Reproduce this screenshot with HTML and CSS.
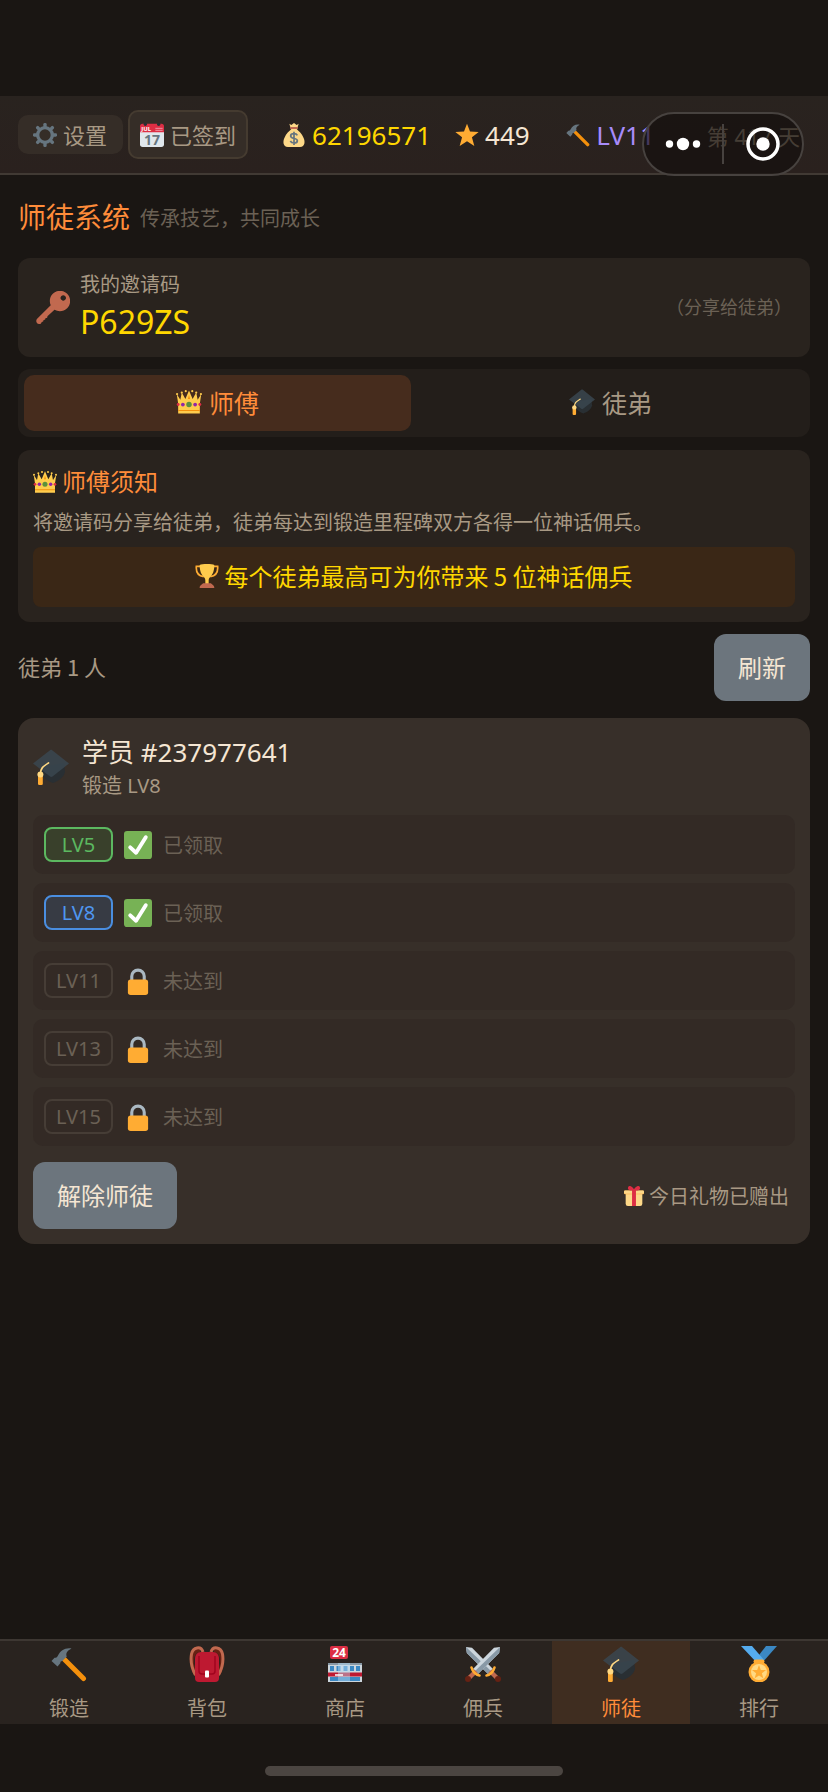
FILE: index.html
```html
<!DOCTYPE html>
<html lang="zh-CN">
<head>
  <meta charset="UTF-8">
  <meta name="viewport" content="width=device-width, initial-scale=1.0">
  <title>师徒系统</title>
  <link rel="stylesheet" href="styles.css">
</head>
<body>
  <!-- icon sprite -->
  <svg class="sprite" aria-hidden="true">
    <symbol id="i-gear" viewBox="0 0 36 36">
      <g fill="#66757f">
        <g id="teeth">
          <rect x="15.5" y="0" width="5" height="8" rx="2"/>
          <rect x="15.5" y="28" width="5" height="8" rx="2"/>
        </g>
        <use href="#teeth" transform="rotate(45 18 18)"/>
        <use href="#teeth" transform="rotate(90 18 18)"/>
        <use href="#teeth" transform="rotate(135 18 18)"/>
      </g>
      <circle cx="18" cy="18" r="11" fill="none" stroke="#66757f" stroke-width="5"/>
    </symbol>
    <symbol id="i-money" viewBox="0 0 36 36">
      <path fill="#fdd888" d="M31.9 21.5C30 16 25 12 22 9h-8c-3 3-8 7-9.9 12.500C1 27 1 36 9 36h18c8 0 8-9 4.900-14.500z"/>
      <path fill="#fdd888" d="M11 1l3 2 4-3 4 3 3-2-2 7H13z"/>
      <rect x="12" y="6" width="12" height="3" rx="1.5" fill="#bf6952"/>
      <path fill="none" stroke="#67757f" stroke-width="2.6" d="M23 18.500c-1-2-3-2.500-5-2.500-3 0-5 1.200-5 3.500 0 5 10 2.500 10 7 0 2.500-2 3.500-5 3.500-2.500 0-4.500-1-5.500-3M18 13v20"/>
    </symbol>
    <symbol id="i-star" viewBox="0 0 36 36">
      <path fill="#ffac33" d="M18 1l4.500 11.800L35.500 13.400 25.400 21.500 29 34.500 18 27.200 7 34.500 10.600 21.500.500 13.400 13.500 12.800z"/>
    </symbol>
    <symbol id="i-hammer" viewBox="0 0 36 36">
      <path stroke="#f4900c" stroke-width="5" stroke-linecap="round" d="M13 13l19.500 19.500"/>
      <path fill="#66757f" d="M20.500 2.500C14 1.500 9.500 4.500 7 9.500c-1 2-2 2.300-3.500 2.300L.500 15l6 5.500 2.800-3.200c0-1.500.700-2.300 2-2.300l4.500-4.500C14.500 7.500 16 4.800 20.500 2.500z"/>
    </symbol>
    <symbol id="i-key" viewBox="0 0 36 36">
      <path fill="#c1694f" fill-rule="evenodd" d="M33 3c-4.200-4.200-11-4.200-15.200 0-3.300 3.300-4 8-2.200 12L1.200 29.400C-.600 31.200.300 35 3.200 35c2 0 2.600-1 2.800-2.300 1.500 0 2-.700 1.900-2.100 1.600.1 2.200-.500 2.200-2 1.400.1 2.100-.400 2-1.800l7.500-6.900c4.200 2.400 9.800 1.900 13.400-1.700C37.200 14 37.200 7.200 33 3zm-2.200 6.300a2.700 2.700 0 1 1-3.900-3.900 2.700 2.700 0 0 1 3.900 3.900z"/>
    </symbol>
    <symbol id="i-crown" viewBox="0 0 36 36">
      <path fill="#ffcc4d" d="M3 34V20L1 7l5 8 2-10 5 9 5-12 5 12 5-9 2 10 5-8-2 13v14z"/>
      <path fill="#f4900c" d="M18 8l1.500 6h-3zM3 29h30v1.500H3z"/>
      <g fill="#ffcc4d"><circle cx="1.5" cy="7" r="1.5"/><circle cx="8" cy="5" r="1.5"/><circle cx="13.5" cy="3" r="1.5"/><circle cx="22.5" cy="3" r="1.5"/><circle cx="28" cy="5" r="1.5"/><circle cx="34.5" cy="7" r="1.5"/></g>
      <circle cx="18" cy="21.5" r="3.8" fill="#5c913b"/>
      <circle cx="9.5" cy="21.5" r="2.6" fill="#9226a8"/>
      <circle cx="26.5" cy="21.5" r="2.6" fill="#9226a8"/>
      <circle cx="3" cy="21.5" r="2" fill="#dd2e44"/>
      <circle cx="33" cy="21.5" r="2" fill="#dd2e44"/>
    </symbol>
    <symbol id="i-cap" viewBox="0 0 36 36">
      <path fill="#292f33" d="M9 18l22-4 1 9c-1.500 6-7 9-12 11-5-2-9-4-11-9z"/>
      <path fill="#394650" fill-opacity=".85" d="M0 14.500L17 1.200c.7-.5 1.500-.5 2.200 0L36 14.500 19.500 27.500c-.8.600-1.600.6-2.400 0z"/>
      <path fill="none" stroke="#ffd983" stroke-width="1.7" stroke-linecap="round" d="M15.500 14C10 17.500 7.500 19 7.500 25"/>
      <rect x="5" y="24.5" width="4.8" height="11.5" rx="1.3" fill="#ffac33"/>
      <circle cx="7.4" cy="25.5" r="3" fill="#ffd983"/>
    </symbol>
    <symbol id="i-trophy" viewBox="0 0 36 36">
      <path fill="none" stroke="#ffac33" stroke-width="2.5" d="M9 3.500H2c-.600 7 2 14 11 15.500M27 3.500h7c.600 7-2 14-11 15.500"/>
      <path fill="#ffcc4d" d="M7 1.500C10-.300 26-.300 29 1.500c0 9-2.500 14.500-6.500 18.500-1.500 1.500-2 3-2 5v5h-5v-5c0-2-.500-3.500-2-5C9.500 16 7 10.500 7 1.500z"/>
      <path fill="#c1694f" d="M12 29h12c1 2 5 2.500 5 6.900H7C7 31.500 11 31 12 29z"/>
    </symbol>
    <symbol id="i-check" viewBox="0 0 36 36">
      <rect width="36" height="36" rx="4" fill="#77b255"/>
      <path fill="none" stroke="#fff" stroke-width="5" stroke-linecap="round" stroke-linejoin="round" d="M8 21l7.500 7L28 8"/>
    </symbol>
    <symbol id="i-lock" viewBox="0 0 36 36">
      <path fill="none" stroke="#aab8c2" stroke-width="4" d="M10 18v-6a8 8 0 0 1 16 0v6"/>
      <rect x="5" y="16" width="26" height="20" rx="3.5" fill="#ffac33"/>
    </symbol>
    <symbol id="i-gift" viewBox="0 0 36 36">
      <path fill="#fdd888" d="M3 14h30v18a4 4 0 0 1-4 4H7a4 4 0 0 1-4-4z"/>
      <rect y="8" width="36" height="7" rx="2" fill="#fcab40"/>
      <rect y="8" width="36" height="6" rx="2" fill="#fdd888"/>
      <path fill="#dd2e44" d="M14.500 8h7v28h-7zM18 8C9 9 5 6 8 1c3-3 8 1 10 5 2-4 7-8 10-5 3 5-1 8-10 7z"/>
    </symbol>
    <symbol id="i-backpack" viewBox="0 0 36 36">
      <path fill="none" stroke="#662113" stroke-width="4" d="M11 4C1 5 1 20 8 30M25 4c10 1 10 16 3 26"/>
      <path fill="none" stroke="#c1694f" stroke-width="3" d="M14 6C12-.500 4 1 2.500 8c-1 6 0 14 4 21M22 6c2-6.500 10-5 11.500 2 1 6 0 14-4 21"/>
      <path fill="#be1931" d="M12 6h12c4 0 6 3 6 7v19a4 4 0 0 1-4 4H10a4 4 0 0 1-4-4V13c0-4 2-7 6-7z"/>
      <path fill="none" stroke="#a0041e" stroke-width="1.5" d="M10 10v15c0 2 1 3 3 3h10c2 0 3-1 3-3V10"/>
      <rect x="16" y="24.5" width="4" height="7" rx="1" fill="#fff"/>
    </symbol>
    <symbol id="i-swords" viewBox="0 0 36 36">
      <g id="sword">
        <path fill="#ccd6dd" d="M1 1l6 .8L28 23l-5 5L1.800 7z"/>
        <path fill="#8899a6" d="M1 1l25.500 24.500L23 28 1.800 7z"/>
        <path stroke="#c1694f" stroke-width="4.5" d="M25 25l8 8"/>
        <path fill="none" stroke="#ffac33" stroke-width="2.6" stroke-linecap="round" d="M21.500 29.500C25 29 28.500 25.500 29.500 21.500"/>
        <circle cx="33" cy="33" r="3" fill="#662113"/>
      </g>
      <use href="#sword" transform="matrix(-1 0 0 1 36 0)"/>
    </symbol>
    <symbol id="i-medal" viewBox="0 0 36 36">
      <path fill="#3b88c3" d="M25 0L15 13l6 4L36 0z"/>
      <path fill="#55acee" d="M0 0h11l12 14-6 4z"/>
      <rect x="12.5" y="13.5" width="11" height="4" rx="2" fill="#ffac33"/>
      <circle cx="18" cy="26" r="10.5" fill="#ffac33"/>
      <circle cx="18" cy="26" r="8" fill="#ffd983"/>
      <path fill="#ffac33" d="M18 19l1.800 4.900 5.200.2-4.100 3.200 1.400 5-4.300-2.900-4.300 2.900 1.400-5-4.100-3.200 5.200-.2z"/>
    </symbol>
  </svg>

  <header class="topbar">
    <button type="button" class="btn-settings"><svg class="icon icon-24"><use href="#i-gear"/></svg>设置</button>
    <button type="button" class="btn-sign">
      <svg class="icon icon-24" viewBox="0 0 36 36" aria-hidden="true">
        <path fill="#e0e7ec" d="M36 32a4 4 0 0 1-4 4H4a4 4 0 0 1-4-4V9h36z"/>
        <path fill="#dd2e44" d="M0 14V5a4 4 0 0 1 4-4h28a4 4 0 0 1 4 4v9z"/>
        <circle cx="8" cy="2" r="2.5" fill="#292f33"/>
        <circle cx="28" cy="2" r="2.5" fill="#292f33"/>
        <path stroke="#f4abba" stroke-width="1.2" d="M23 8h11M23 11h11"/>
        <text x="2" y="12" font-size="9" font-weight="700" fill="#fff">JUL</text>
        <text x="18" y="33" font-size="21" font-weight="700" fill="#66757f" text-anchor="middle">17</text>
      </svg>已签到
    </button>
    <div class="resources">
      <span class="res gold"><svg class="icon icon-24"><use href="#i-money"/></svg>62196571</span>
      <span class="res"><svg class="icon icon-24"><use href="#i-star"/></svg>449</span>
      <span class="res level"><svg class="icon icon-24"><use href="#i-hammer"/></svg>LV11</span>
    </div>
    <span class="day">第 417 天</span>
    <div class="capsule">
      <button type="button" class="capsule-btn" aria-label="更多">
        <svg class="dots" viewBox="0 0 36 14" fill="#fff"><circle cx="4.5" cy="7" r="3.7"/><circle cx="18" cy="7" r="6.2"/><circle cx="31.5" cy="7" r="3.7"/></svg>
      </button>
      <span class="capsule-line"></span>
      <button type="button" class="capsule-btn" aria-label="关闭">
        <svg class="ring" viewBox="0 0 34 34"><circle cx="17" cy="17" r="15" fill="none" stroke="#fff" stroke-width="3.5"/><circle cx="17" cy="17" r="6.7" fill="#fff"/></svg>
      </button>
    </div>
  </header>

  <main class="content">
    <div class="page-title">
      <h1>师徒系统</h1>
      <span>传承技艺，共同成长</span>
    </div>

    <section class="card invite">
      <svg class="icon icon-34"><use href="#i-key"/></svg>
      <div class="invite-info">
        <div class="invite-label">我的邀请码</div>
        <div class="invite-code">P629ZS</div>
      </div>
      <span class="invite-hint">（分享给徒弟）</span>
    </section>

    <div class="tabs">
      <button type="button" class="tab active"><svg class="icon icon-26"><use href="#i-crown"/></svg>师傅</button>
      <button type="button" class="tab"><svg class="icon icon-26"><use href="#i-cap"/></svg>徒弟</button>
    </div>

    <section class="card notice">
      <h2><svg class="icon icon-24"><use href="#i-crown"/></svg>师傅须知</h2>
      <p>将邀请码分享给徒弟，徒弟每达到锻造里程碑双方各得一位神话佣兵。</p>
      <div class="banner"><svg class="icon icon-24"><use href="#i-trophy"/></svg>每个徒弟最高可为你带来 5 位神话佣兵</div>
    </section>

    <div class="list-head">
      <span class="count">徒弟 1 人</span>
      <button type="button" class="btn">刷新</button>
    </div>

    <section class="student">
      <div class="student-head">
        <svg class="icon icon-36"><use href="#i-cap"/></svg>
        <div>
          <h3>学员 #237977641</h3>
          <div class="student-level">锻造 LV8</div>
        </div>
      </div>
      <ul class="milestones">
        <li><span class="badge green">LV5</span><svg class="icon icon-28"><use href="#i-check"/></svg>已领取</li>
        <li><span class="badge blue">LV8</span><svg class="icon icon-28"><use href="#i-check"/></svg>已领取</li>
        <li><span class="badge">LV11</span><svg class="icon icon-28"><use href="#i-lock"/></svg>未达到</li>
        <li><span class="badge">LV13</span><svg class="icon icon-28"><use href="#i-lock"/></svg>未达到</li>
        <li><span class="badge">LV15</span><svg class="icon icon-28"><use href="#i-lock"/></svg>未达到</li>
      </ul>
      <div class="student-foot">
        <button type="button" class="btn">解除师徒</button>
        <span class="gift"><svg class="icon icon-20"><use href="#i-gift"/></svg>今日礼物已赠出</span>
      </div>
    </section>
  </main>

  <nav class="bottom-nav">
    <a href="#forge"><svg class="icon icon-36"><use href="#i-hammer"/></svg>锻造</a>
    <a href="#bag"><svg class="icon icon-36"><use href="#i-backpack"/></svg>背包</a>
    <a href="#shop">
      <svg class="icon icon-36" viewBox="0 0 36 36" aria-hidden="true">
        <rect x="1" y="17" width="34" height="19" fill="#ccd6dd"/>
        <rect x="1" y="17" width="34" height="2" fill="#8899a6"/>
        <path fill="#3b88c3" d="M3 20h4v5H3zM9.500 20h4v5h-4zM16.500 20h4v5h-4zM23 20h4v5h-4zM29 20h4v5h-4zM3 31h30v4H3z"/>
        <rect x="1" y="26.5" width="34" height="4" fill="#be1931"/>
        <path fill="#bbddf5" fill-opacity=".45" d="M11 17h12v19H11z"/>
        <path stroke="#fff" stroke-width="1.5" d="M8 29h8"/>
        <rect x="3" y="0" width="18" height="13" rx="2" fill="#dd2e44"/>
        <text x="12" y="11" font-size="12" font-weight="700" fill="#fff" text-anchor="middle">24</text>
      </svg>商店
    </a>
    <a href="#mercenary"><svg class="icon icon-36"><use href="#i-swords"/></svg>佣兵</a>
    <a href="#mentor" class="active"><svg class="icon icon-36"><use href="#i-cap"/></svg>师徒</a>
    <a href="#rank"><svg class="icon icon-36"><use href="#i-medal"/></svg>排行</a>
  </nav>
  <div class="home-area"><div class="home-bar"></div></div>
</body>
</html>
```
FILE: styles.css
```css
* {
  box-sizing: border-box;
}
body {
  display: flex;
  flex-direction: column;
  min-height: 100vh;
  margin: 0;
  padding-top: 96px;
  background-color: #1a1613;
  color: #a89984;
  font-family: "Noto Sans", "Noto Sans CJK SC", sans-serif;
  font-size: 20px;
}
h1, h2, h3, p, ul {
  margin: 0;
  padding: 0;
  font-weight: 400;
}
button {
  font-family: inherit;
  border: none;
  cursor: pointer;
}
.sprite {
  position: absolute;
  width: 0;
  height: 0;
}
.icon {
  flex: none;
}
.icon-20 { width: 20px; height: 20px; }
.icon-24 { width: 24px; height: 24px; }
.icon-26 { width: 26px; height: 26px; }
.icon-28 { width: 28px; height: 28px; }
.icon-34 { width: 34px; height: 34px; }
.icon-36 { width: 36px; height: 36px; }

/* top bar */
.topbar {
  position: relative;
  display: flex;
  align-items: center;
  height: 79px;
  padding: 0 28px 0 18px;
  background: linear-gradient(#29231f, #2a211e);
  border-bottom: 2px solid #413a34;
}
.btn-settings, .btn-sign {
  display: flex;
  align-items: center;
  gap: 6px;
  font-size: 22px;
  line-height: 24px;
  color: #a89984;
  background-color: #352d27;
}
.btn-settings {
  height: 39px;
  padding: 0 16px 0 15px;
  border-radius: 10px;
}
.btn-sign {
  height: 49px;
  margin-left: 5px;
  padding: 0 10px;
  border: 2px solid #453b30;
  border-radius: 10px;
}
.resources {
  flex: 1;
  display: flex;
  gap: 24px;
  padding: 0 52px 0 34px;
}
.res {
  display: flex;
  align-items: center;
  gap: 6px;
  font-size: 26px;
  line-height: 36px;
  color: #f5e6d3;
}
.res.gold {
  color: #ffd700;
}
.res.level {
  margin-left: auto;
  color: #a78bfa;
}
.day {
  font-size: 22px;
  color: #a89984;
}
.capsule {
  position: absolute;
  top: 16px;
  right: 24px;
  display: flex;
  align-items: center;
  width: 162px;
  height: 64px;
  border: 2px solid #47423f;
  border-radius: 32px;
  background-color: rgba(18, 14, 12, 0.66);
}
.capsule-btn {
  flex: 1;
  display: flex;
  align-items: center;
  justify-content: center;
  padding: 0;
  background: none;
}
.capsule-line {
  width: 2px;
  height: 40px;
  background-color: #47423f;
}
.dots {
  width: 36px;
  height: 14px;
}
.ring {
  width: 34px;
  height: 34px;
}

/* content */
.content {
  flex: 1;
  padding: 22px 18px;
}
.page-title {
  display: flex;
  align-items: center;
  gap: 10px;
  height: 40px;
  margin-bottom: 21px;
  color: #6b6155;
}
.page-title h1 {
  padding-bottom: 2px;
  font-size: 28px;
  color: #ff8c3a;
}
.card {
  margin-bottom: 12px;
  padding: 15px;
  border-radius: 12px;
  background-color: #29231e;
}
.invite {
  display: flex;
  align-items: center;
  padding: 13px 18px 12px;
}
.invite-info {
  flex: 1;
  margin-left: 10px;
}
.invite-label {
  line-height: 28px;
}
.invite-code {
  font-size: 32px;
  line-height: 46px;
  color: #ffd700;
}
.invite-hint {
  padding-bottom: 4px;
  font-size: 18px;
  color: #6b6155;
}
.tabs {
  display: flex;
  gap: 6px;
  margin-bottom: 13px;
  padding: 6px;
  border-radius: 12px;
  background-color: #231e1a;
}
.tab {
  flex: 1;
  display: flex;
  align-items: center;
  justify-content: center;
  gap: 7px;
  height: 56px;
  padding: 0 0 2px;
  border-radius: 10px;
  background: none;
  font-size: 25px;
  color: #a89984;
}
.tab.active {
  background-color: #462c1d;
  color: #ff8c3a;
}
.notice h2 {
  display: flex;
  align-items: center;
  gap: 5px;
  font-size: 24px;
  line-height: 34px;
  color: #ff8c3a;
}
.notice p {
  margin: 9px 0;
  line-height: 30px;
}
.banner {
  display: flex;
  align-items: center;
  justify-content: center;
  gap: 5px;
  height: 60px;
  padding-bottom: 3px;
  border-radius: 8px;
  background-color: #3a2716;
  font-family: "Noto Sans CJK SC", sans-serif;
  font-size: 24px;
  color: #ffd700;
}
.list-head {
  display: flex;
  align-items: center;
  justify-content: space-between;
  margin-bottom: 17px;
}
.count {
  padding-bottom: 4px;
  font-family: "Noto Sans CJK SC", sans-serif;
  font-size: 22px;
}
.btn {
  height: 67px;
  padding: 0 24px 3px;
  border-radius: 12px;
  background-color: #6c757d;
  font-size: 24px;
  color: #f5e6d3;
}

/* student card */
.student {
  padding: 15px;
  border-radius: 16px;
  background-color: #372f29;
}
.student-head {
  display: flex;
  align-items: center;
  gap: 13px;
  margin-bottom: 14px;
}
.student-head h3 {
  font-size: 26px;
  line-height: 38px;
  color: #f5e6d3;
}
.student-level {
  line-height: 30px;
}
.milestones {
  display: flex;
  flex-direction: column;
  gap: 9px;
  margin-bottom: 16px;
  list-style: none;
}
.milestones li {
  display: flex;
  align-items: center;
  gap: 11px;
  height: 59px;
  padding: 0 11px;
  border-radius: 10px;
  background-color: #332a25;
  color: #6b6155;
}
.badge {
  width: 69px;
  height: 35px;
  border: 2px solid #463d36;
  border-radius: 8px;
  line-height: 31px;
  text-align: center;
}
.badge.green {
  border-color: #5cb860;
  background-color: #39402b;
  color: #5cb860;
}
.badge.blue {
  border-color: #4a8ee0;
  background-color: #373b44;
  color: #4f96f0;
}
.student-foot {
  display: flex;
  align-items: center;
  justify-content: space-between;
}
.gift {
  display: flex;
  align-items: center;
  gap: 5px;
  padding-right: 6px;
}

/* bottom nav */
.bottom-nav {
  display: flex;
  border-top: 2px solid #3d3732;
  background-color: #29231f;
}
.bottom-nav a {
  flex: 1;
  display: flex;
  flex-direction: column;
  align-items: center;
  gap: 12px;
  height: 83px;
  padding-top: 5px;
  line-height: 30px;
  color: #a89984;
  text-decoration: none;
}
.bottom-nav a.active {
  background-color: #3f2d20;
  color: #ff8c3a;
}
.home-area {
  height: 68px;
  padding-top: 42px;
}
.home-bar {
  width: 36%;
  height: 10px;
  margin: 0 auto;
  border-radius: 5px;
  background-color: #4b4541;
}
```
